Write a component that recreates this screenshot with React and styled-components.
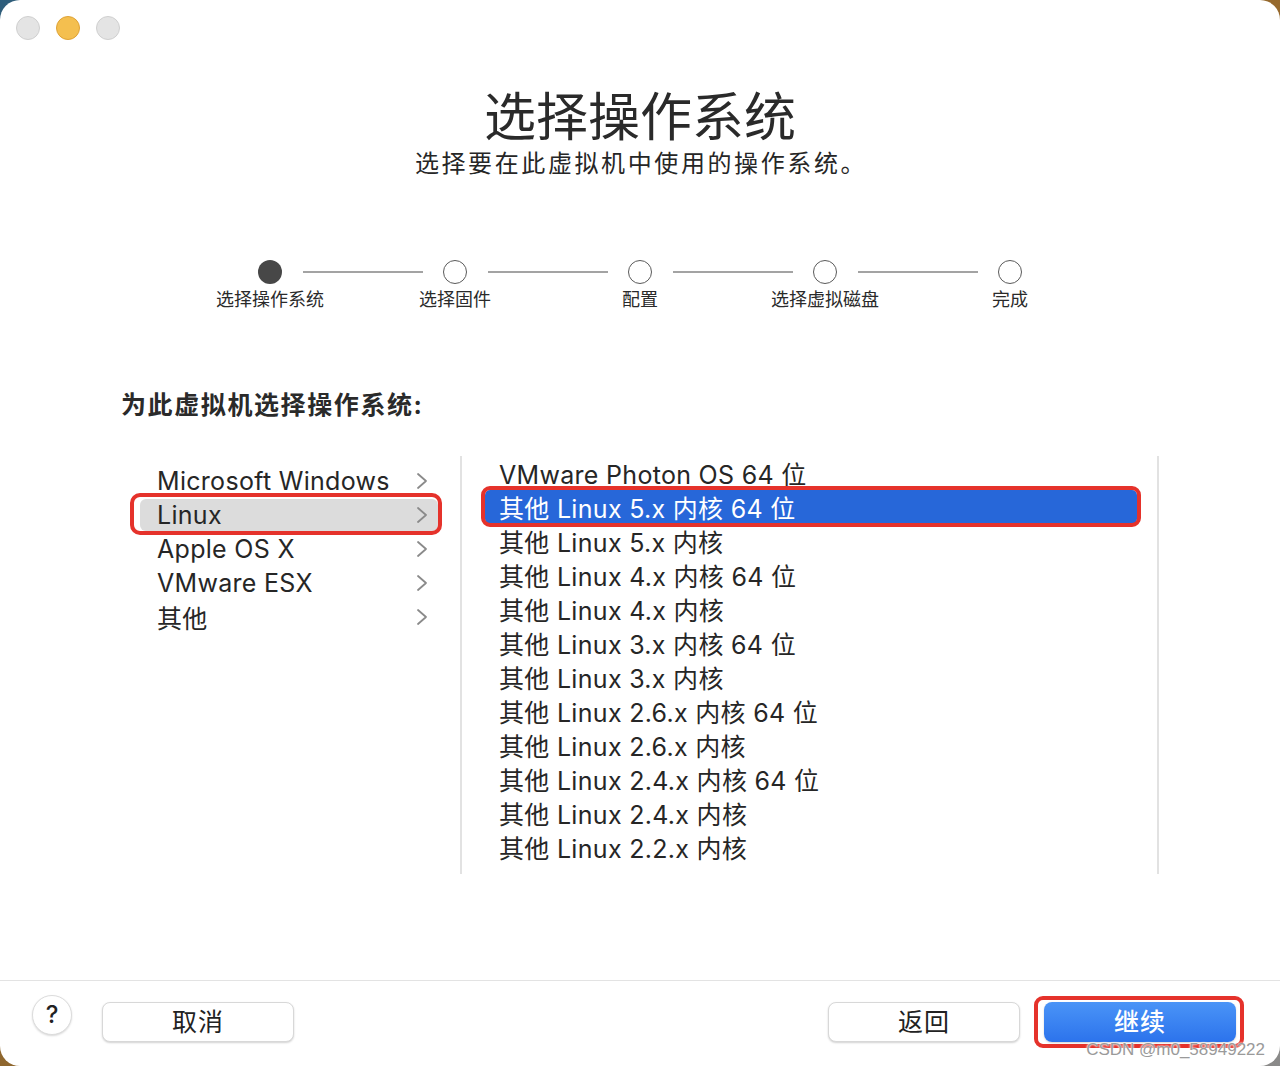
import React, { useState } from 'react';
import styled, { createGlobalStyle } from 'styled-components';

const GlobalStyle = createGlobalStyle`
    html, body {
        margin: 0;
        padding: 0;
        background: linear-gradient(135deg, #2d5d7c 0%, #7d6232 22%, #9a6a2c 60%, #8a8a8a 100%);
    }
    body {
        font-family: Inter, "Noto Sans CJK SC", sans-serif;
        color: #262626;
    }
`

const steps = ['选择操作系统', '选择固件', '配置', '选择虚拟磁盘', '完成'];
const families = ['Microsoft Windows', 'Linux', 'Apple OS X', 'VMware ESX', '其他'];
const versions = [
    'VMware Photon OS 64 位',
    '其他 Linux 5.x 内核 64 位',
    '其他 Linux 5.x 内核',
    '其他 Linux 4.x 内核 64 位',
    '其他 Linux 4.x 内核',
    '其他 Linux 3.x 内核 64 位',
    '其他 Linux 3.x 内核',
    '其他 Linux 2.6.x 内核 64 位',
    '其他 Linux 2.6.x 内核',
    '其他 Linux 2.4.x 内核 64 位',
    '其他 Linux 2.4.x 内核',
    '其他 Linux 2.2.x 内核',
];

const Window = styled.div`
    position: relative;
    width: 1280px;
    height: 1066px;
    background: #fff;
    border-radius: 20px;
    display: flex;
    flex-direction: column;
    overflow: hidden;
`

const TitleBar = styled.div`
    height: 56px;
    flex-shrink: 0;
    display: flex;
    align-items: center;
    gap: 16px;
    padding-left: 16px;
`

const Light = styled.span`
    width: 22px;
    height: 22px;
    border-radius: 50%;
    background: ${p => p.active ? '#f4bf4f' : '#e4e4e4'};
    border: 1px solid ${p => p.active ? '#dea236' : '#cfcfcf'};
`

const Header = styled.div`
    margin-top: 32px;
    display: flex;
    flex-direction: column;
    align-items: center;
    .title {
        font-size: 52px;
        line-height: 60px;
        color: #2a2a2a;
    }
    .subtitle {
        font-size: 24px;
        line-height: 32px;
        letter-spacing: 2.6px;
        margin-left: 2px;
    }
`

const Stepper = styled.div`
    margin: 80px auto 0;
    width: 925px;
    display: grid;
    grid-template-columns: repeat(5, 185px);
`

const Step = styled.div`
    position: relative;
    display: flex;
    flex-direction: column;
    align-items: center;
    .dot {
        width: 24px;
        height: 24px;
        box-sizing: border-box;
        border-radius: 50%;
        background: ${p => p.done ? '#474747' : '#fff'};
        border: ${p => p.done ? 'none' : '1.5px solid #5a5a5a'};
    }
    .label {
        margin-top: 4px;
        font-size: 18px;
        line-height: 24px;
        color: #2a2a2a;
    }
    &:not(:last-child)::after {
        content: '';
        position: absolute;
        top: 11px;
        left: calc(50% + 33px);
        width: 120px;
        height: 2px;
        background: #a3a3a3;
    }
`

const Section = styled.div`
    padding-left: 121px;
    margin-top: 77px;
    flex: 1;
    display: flex;
    flex-direction: column;
`

const Heading = styled.div`
    font-size: 25px;
    font-weight: 700;
    line-height: 32px;
    color: #2a2a2a;
    letter-spacing: 1.6px;
`

const Panels = styled.div`
    margin-top: 35px;
    display: grid;
    grid-template-columns: 341px 697px;
    height: 418px;
`

const Column = styled.div`
    border-right: 2px solid #e2e2e2;
    padding-top: ${p => p.offset || 0}px;
    display: flex;
    flex-direction: column;
    gap: ${p => p.gap || 0}px;
`

const FamilyRow = styled.div`
    position: relative;
    height: 32px;
    margin: 0 22px 0 19px;
    padding: 0 10px 0 17px;
    border-radius: 6px;
    display: flex;
    align-items: center;
    justify-content: space-between;
    font-size: 25px;
    letter-spacing: 0.3px;
    background: ${p => p.selected ? '#dcdcdc' : 'transparent'};
    ${p => p.marked && `
        &::before {
            content: '';
            position: absolute;
            left: -10px;
            right: -4px;
            top: -6px;
            bottom: -4px;
            border: 4px solid #e5322b;
            border-radius: 10px;
        }
    `}
`

const VersionRow = styled.div`
    position: relative;
    height: 34px;
    margin: 0 20px 0 23px;
    padding-left: 14px;
    border-radius: 5px;
    display: flex;
    align-items: center;
    font-size: 25px;
    letter-spacing: 0.3px;
    color: ${p => p.selected ? '#fff' : '#262626'};
    background: ${p => p.selected ? '#2767d9' : 'transparent'};
    ${p => p.marked && `
        &::before {
            content: '';
            position: absolute;
            left: -4px;
            right: -4px;
            top: -4px;
            bottom: -3px;
            border: 4px solid #e5322b;
            border-radius: 9px;
        }
    `}
`

const Footer = styled.div`
    box-sizing: border-box;
    height: 86px;
    flex-shrink: 0;
    border-top: 1px solid #e3e3e3;
    display: flex;
    align-items: center;
    padding: 0 44px 3px 32px;
    gap: 30px;
    .spacer {
        flex: 1;
    }
`

const ButtonGroup = styled.div`
    display: flex;
    align-items: center;
    gap: 24px;
`

const HelpButton = styled.button`
    width: 40px;
    height: 40px;
    border-radius: 50%;
    border: 1px solid #dcdcdc;
    background: #fff;
    box-shadow: 0 1px 2px rgba(0,0,0,0.15);
    font-family: Inter, sans-serif;
    font-size: 24px;
    font-weight: 500;
    color: #222;
    padding: 0 0 2px;
    margin-top: -14px;
`

const Button = styled.button`
    position: relative;
    width: 192px;
    height: 40px;
    border-radius: 8px;
    border: ${p => p.primary ? 'none' : '1px solid #d8d8d8'};
    background: ${p => p.primary ? 'linear-gradient(#4a94f7, #2c73ec)' : '#fff'};
    color: ${p => p.primary ? '#fff' : '#222'};
    box-shadow: 0 1px 2px rgba(0,0,0,0.18);
    font-family: "Noto Sans CJK SC", sans-serif;
    font-size: 25px;
    line-height: 30px;
    font-weight: ${p => p.primary ? 500 : 400};
    letter-spacing: 1px;
    padding: 0 0 5px;
    ${p => p.marked && `
        &::before {
            content: '';
            position: absolute;
            left: -10px;
            right: -8px;
            top: -6px;
            bottom: -6px;
            border: 4px solid #e5322b;
            border-radius: 9px;
        }
    `}
`

const Watermark = styled.div`
    position: absolute;
    right: 15px;
    bottom: 6px;
    font-family: "Liberation Sans", sans-serif;
    font-size: 17px;
    color: #9a9a9a;
    text-shadow: 0 0 2px #fff, 0 0 2px #fff;
`

const Chevron = () => (
    <svg width="12" height="18" viewBox="0 0 12 18">
        <polyline points="2,2 10,9 2,16" fill="none" stroke="#8a8a8a" strokeWidth="1.8" strokeLinecap="round" strokeLinejoin="round" />
    </svg>
)

const App = () => {
    const [family, setFamily] = useState(1);
    const [version, setVersion] = useState(1);

    return (
        <>
            <GlobalStyle />
            <Window>
                <TitleBar>
                    <Light />
                    <Light active />
                    <Light />
                </TitleBar>
                <Header>
                    <div className="title">选择操作系统</div>
                    <div className="subtitle">选择要在此虚拟机中使用的操作系统。</div>
                </Header>
                <Stepper>
                    {steps.map((s, i) => (
                        <Step key={i} done={i === 0}>
                            <div className="dot" />
                            <div className="label">{s}</div>
                        </Step>
                    ))}
                </Stepper>
                <Section>
                    <Heading>为此虚拟机选择操作系统:</Heading>
                    <Panels>
                        <Column offset={9} gap={2}>
                            {families.map((f, i) => (
                                <FamilyRow key={i} selected={i === family} marked={i === 1} onClick={() => setFamily(i)}>
                                    <span>{f}</span>
                                    <Chevron />
                                </FamilyRow>
                            ))}
                        </Column>
                        <Column offset={0}>
                            {versions.map((v, i) => (
                                <VersionRow key={i} selected={i === version} marked={i === 1} onClick={() => setVersion(i)}>
                                    {v}
                                </VersionRow>
                            ))}
                        </Column>
                    </Panels>
                </Section>
                <Footer>
                    <HelpButton>?</HelpButton>
                    <Button>取消</Button>
                    <div className="spacer" />
                    <ButtonGroup>
                        <Button>返回</Button>
                        <Button primary marked>继续</Button>
                    </ButtonGroup>
                </Footer>
                <Watermark>CSDN @m0_58949222</Watermark>
            </Window>
        </>
    )
}

export default App;
